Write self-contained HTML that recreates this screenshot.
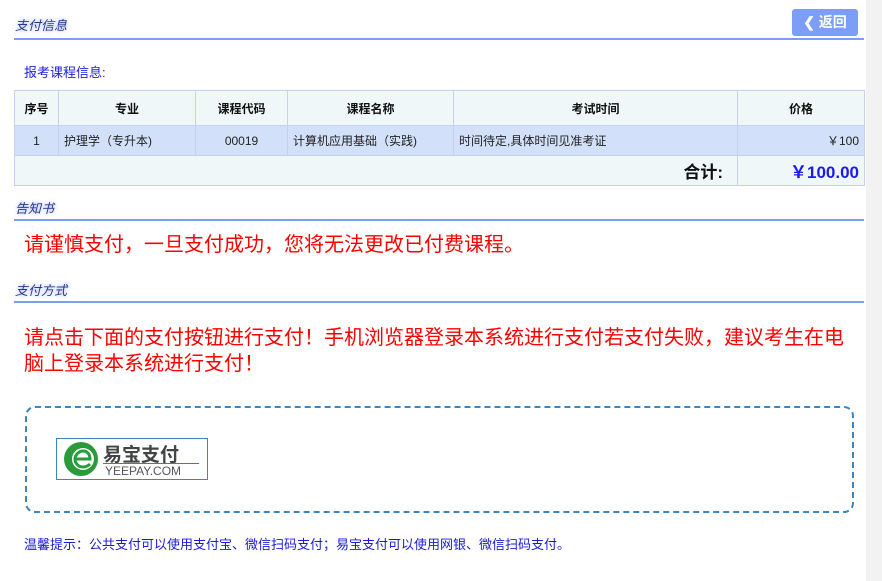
<!DOCTYPE html>
<html><head><meta charset="utf-8"><style>
body{margin:0;width:882px;height:581px;background:#fff;font-family:"Liberation Sans","Noto Sans CJK SC",sans-serif;position:relative;overflow:hidden}
.strip{position:absolute;left:866px;top:0;width:16px;height:581px;background:#f2f2f2}
.t{position:absolute;left:15px;font-size:13px;font-style:italic;color:#2b3a8f;text-shadow:0 0 4px #8fa0f0}
.ln{position:absolute;left:14px;width:850px;height:2px;background:#7b9ef5}
.btn{position:absolute;left:792px;top:9px;width:66px;height:27px;background:#7d9ef7;border-radius:3px;color:#fff;font-weight:bold;font-size:14px;line-height:27px;text-align:center}
table{position:absolute;left:14px;top:90px;width:851px;border-collapse:collapse;font-size:12px}
td{border:1px solid #c3d3ef;padding:0 5px;color:#222}
tr.h td{height:34px;background:#f0f7f8;font-weight:bold;text-align:center;color:#111}
tr.d td{height:29px;background:#d2e1f9}
tr.s td{height:29px;background:#f0f7f8}
.red{position:absolute;left:24px;color:#f00;font-size:20px;line-height:26px;white-space:nowrap}
.box{position:absolute;left:25px;top:406px;width:825px;height:103px;border:2px dashed #3a86c0;border-radius:10px}
</style></head><body>
<div class="strip"></div>
<div class="t" style="top:15px">支付信息</div>
<div class="btn">&#10094; 返回</div>
<div class="ln" style="top:38px"></div>
<div style="position:absolute;left:24px;top:62px;font-size:13px;color:#2020e0">报考课程信息:</div>
<table>
<tr class="h"><td style="width:33px">序号</td><td style="width:126px">专业</td><td style="width:81px">课程代码</td><td style="width:155px">课程名称</td><td style="width:273px">考试时间</td><td>价格</td></tr>
<tr class="d"><td style="text-align:center">1</td><td>护理学（专升本)</td><td style="text-align:center">00019</td><td>计算机应用基础（实践)</td><td>时间待定,具体时间见准考证</td><td style="text-align:right">￥100</td></tr>
<tr class="s"><td colspan="5" style="text-align:right;font-size:17px;font-weight:bold;padding-right:14px;color:#111">合计:</td><td style="text-align:right;font-size:17px;font-weight:bold;color:#1a1af0">￥100.00</td></tr>
</table>
<div class="t" style="top:198px">告知书</div>
<div class="ln" style="top:219px"></div>
<div class="red" style="top:232px">请谨慎支付，一旦支付成功，您将无法更改已付费课程。</div>
<div class="t" style="top:280px">支付方式</div>
<div class="ln" style="top:301px"></div>
<div class="red" style="top:325px">请点击下面的支付按钮进行支付！手机浏览器登录本系统进行支付若支付失败，建议考生在电<br>脑上登录本系统进行支付！</div>
<div class="box"></div>
<div style="position:absolute;left:56px;top:438px;width:150px;height:40px;border:1px solid #3a86c0;background:#fff">
<svg width="46" height="40" style="position:absolute;left:2px;top:0"><circle cx="22" cy="20" r="17" fill="#2a9a3a"/><circle cx="24" cy="20" r="11" fill="#fff"/><path d="M16 20h15c0-5-3-8-7-8s-8 4-8 8 3 8 8 8c3 0 5-1 7-3" stroke="#2a9a3a" stroke-width="3" fill="none"/></svg>
<div style="position:absolute;left:46px;top:1px;font-size:19px;color:#444;font-weight:bold">易宝支付</div>
<div style="position:absolute;left:46px;top:24px;width:96px;height:1px;background:#2a9a3a"></div>
<div style="position:absolute;left:48px;top:25px;font-size:12px;color:#555">YEEPAY.COM</div>
</div>
<div style="position:absolute;left:24px;top:534px;font-size:13px;color:#1a1ad8">温馨提示：公共支付可以使用支付宝、微信扫码支付；易宝支付可以使用网银、微信扫码支付。</div>
</body></html>
